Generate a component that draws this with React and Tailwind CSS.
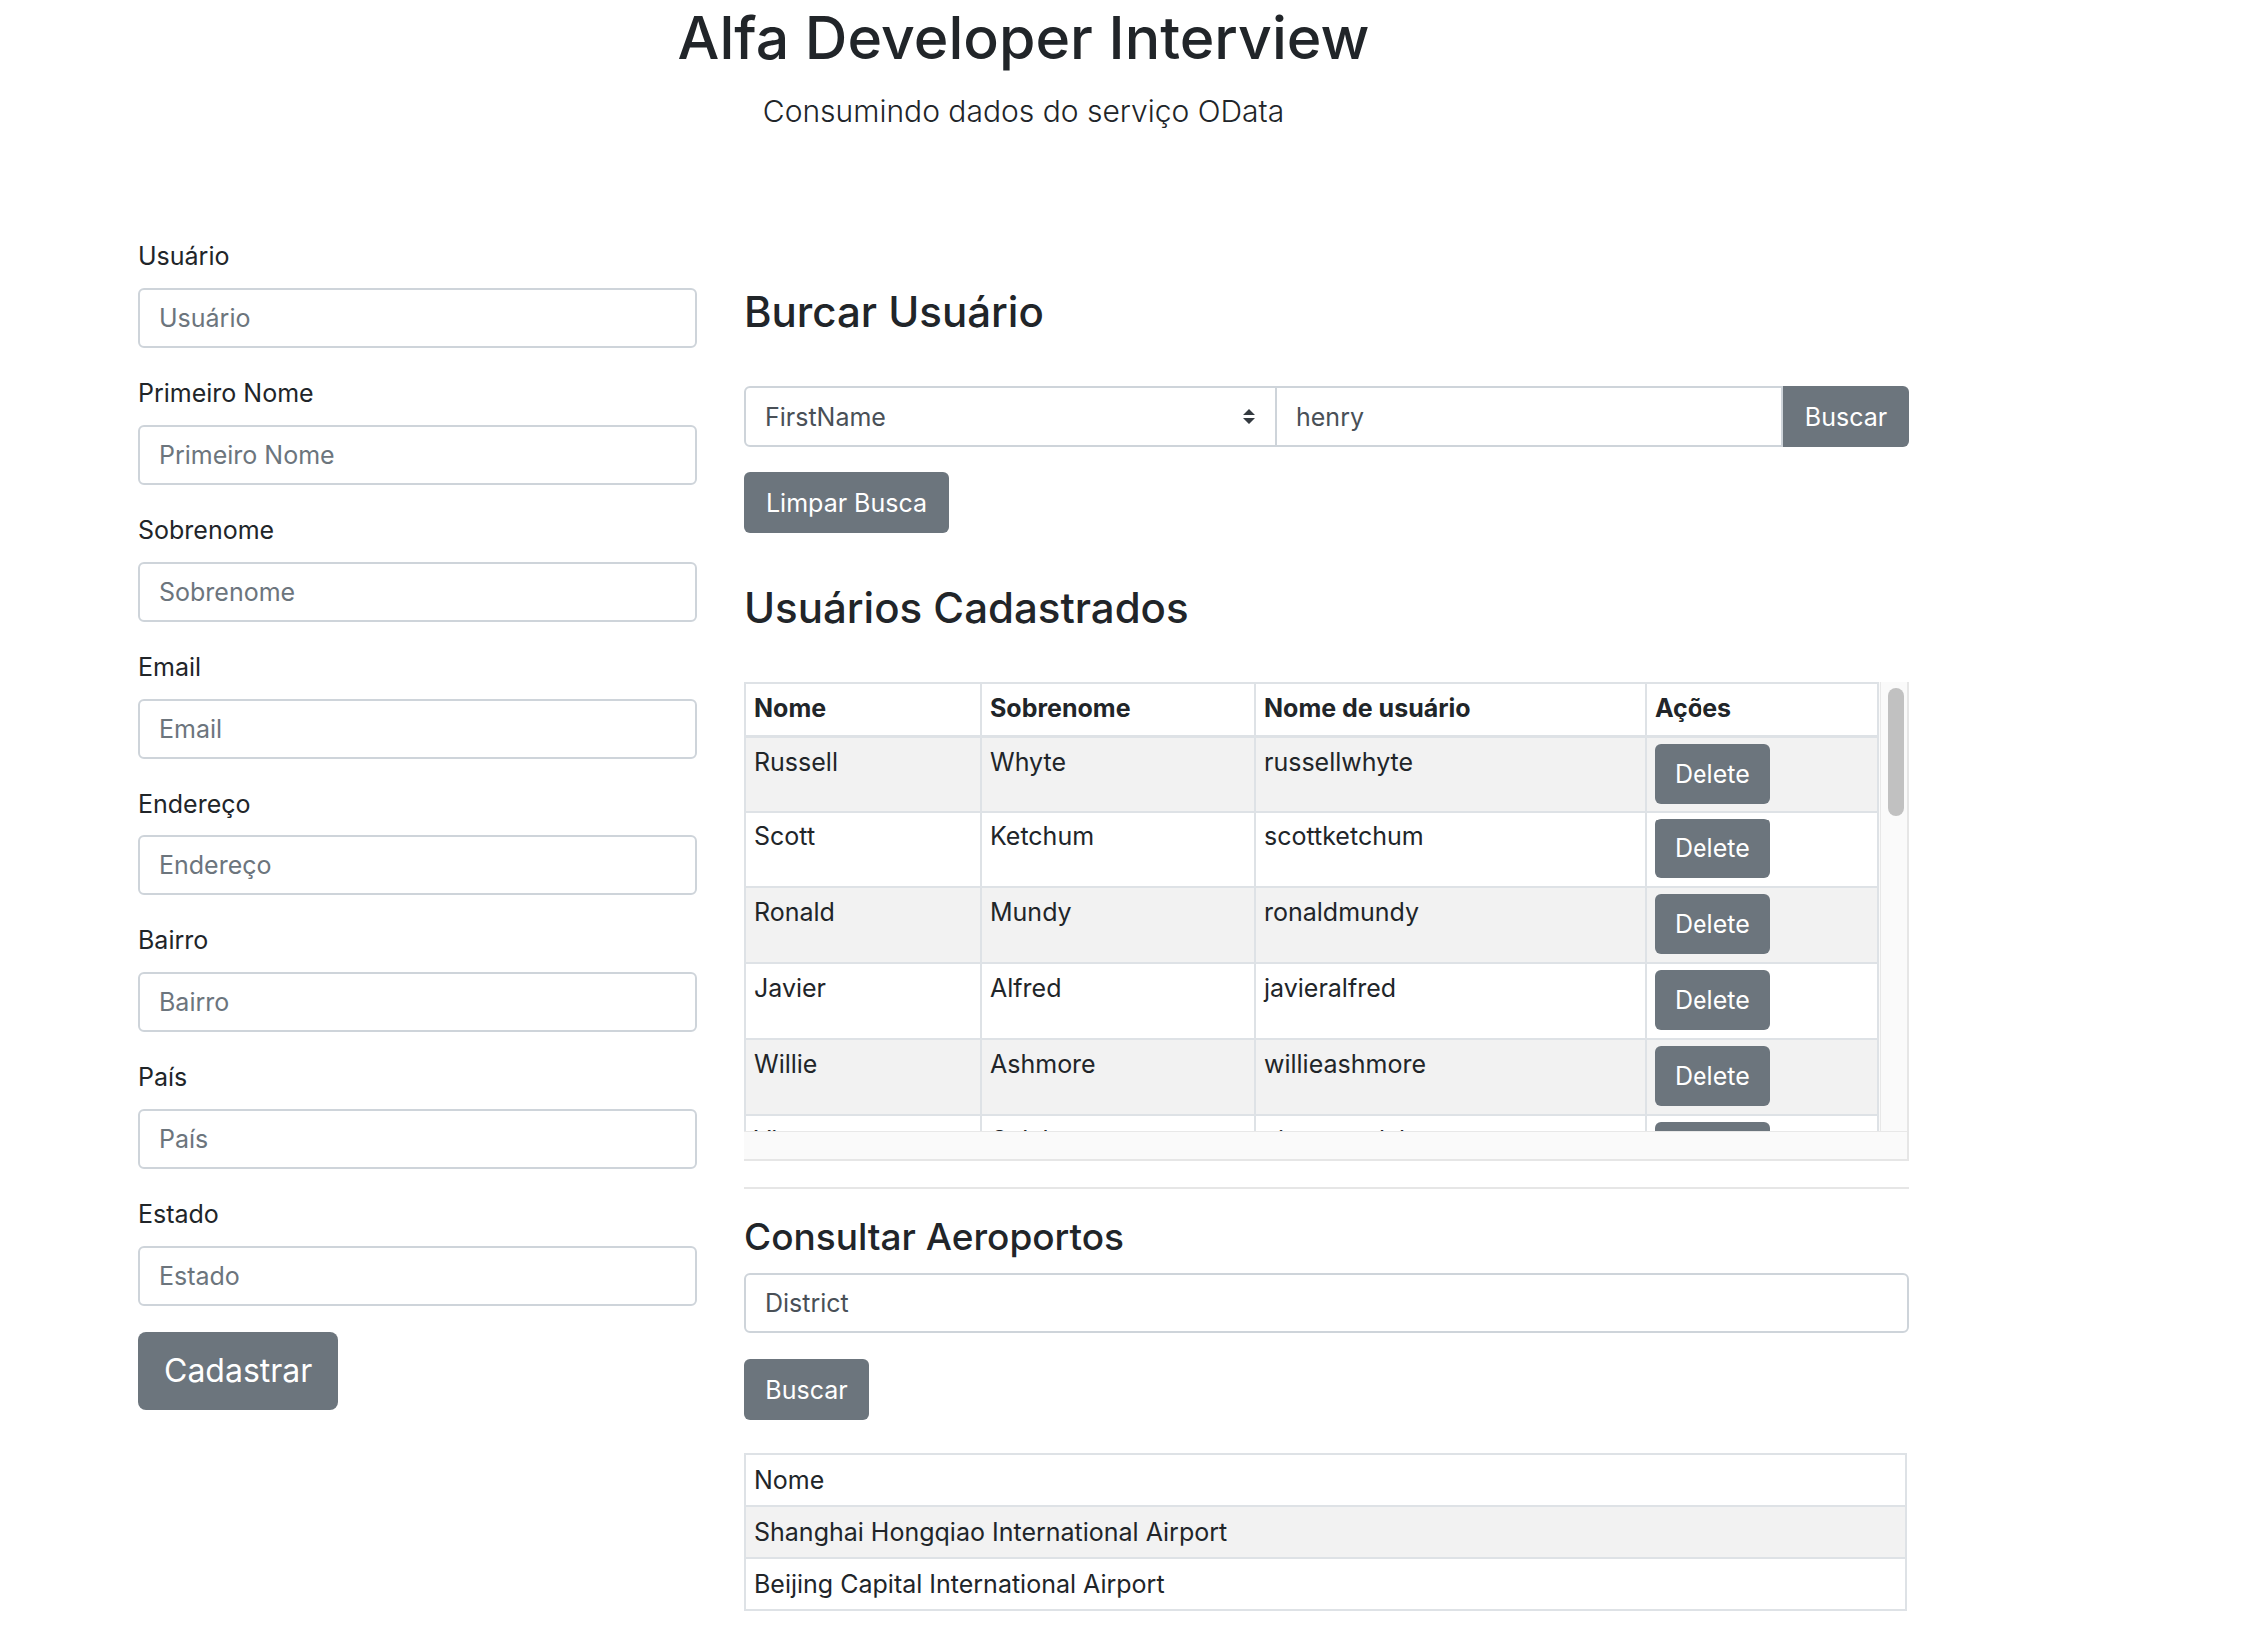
import React from 'react'

// Cadastro + busca de usuários do serviço TripPin (OData)

const FIELDS = ['Usuário', 'Primeiro Nome', 'Sobrenome', 'Email', 'Endereço', 'Bairro', 'País', 'Estado']

const USERS = [
  ['Russell', 'Whyte', 'russellwhyte'],
  ['Scott', 'Ketchum', 'scottketchum'],
  ['Ronald', 'Mundy', 'ronaldmundy'],
  ['Javier', 'Alfred', 'javieralfred'],
  ['Willie', 'Ashmore', 'willieashmore'],
  ['Vincent', 'Calabrese', 'vincentcalabrese'],
  ['Clyde', 'Guess', 'clydeguess'],
]

const AIRPORTS = ['Shanghai Hongqiao International Airport', 'Beijing Capital International Airport']

const inputCls =
  'block h-[60px] w-full rounded-[6px] border-2 border-[#ced4da] bg-white px-[19px] text-[25px] text-[#495057] placeholder:text-[#6c757d] focus:outline-none'

const btnCls = 'rounded-[6px] bg-[#6c757d] px-[19px] text-[25px] leading-[38px] text-white'

function SortArrows() {
  return (
    <svg width="12" height="15" viewBox="0 0 4 5" className="shrink-0">
      <path d="M2 0L0 2h4zm0 5L0 3h4z" fill="#343a40" />
    </svg>
  )
}

function UserForm() {
  return (
    <form className="w-[560px] shrink-0 pt-[237px]" onSubmit={(e) => e.preventDefault()}>
      {FIELDS.map((f) => (
        <div key={f} className="mb-[26px]">
          <label className="mb-[13px] block leading-[38px]">{f}</label>
          <input readOnly placeholder={f} className={inputCls} />
        </div>
      ))}
      <button className="h-[78px] rounded-[8px] bg-[#6c757d] px-[26px] text-[32px] text-white">Cadastrar</button>
    </form>
  )
}

function UsersTable() {
  return (
    <div className="mt-[50px] flex h-[480px] w-[1166px] flex-col border-r-2 border-b-2 border-[#e6e6e6] bg-[#fafafa]">
      <div className="flex h-[450px]">
        <div className="w-[1137px] overflow-hidden">
          <table className="w-[1134px] table-fixed border-collapse bg-white">
            <colgroup>
              <col className="w-[236px]" />
              <col className="w-[274px]" />
              <col className="w-[391px]" />
              <col className="w-[233px]" />
            </colgroup>
            <thead>
              <tr className="h-[53px]">
                {['Nome', 'Sobrenome', 'Nome de usuário', 'Ações'].map((h) => (
                  <th key={h} className="border-2 border-b-[3px] border-[#dee2e6] px-[8px] pt-[5px] text-left align-top font-bold">
                    {h}
                  </th>
                ))}
              </tr>
            </thead>
            <tbody>
              {USERS.map((u, i) => (
                <tr key={u[2]} className={i % 2 === 0 ? 'h-[76px] bg-[#f2f2f2]' : 'h-[76px] bg-white'}>
                  {u.map((c, j) => (
                    <td key={j} className="border-2 border-[#dee2e6] px-[8px] pt-[5px] align-top">{c}</td>
                  ))}
                  <td className="border-2 border-[#dee2e6] px-[8px] pt-[6px] align-top">
                    <button className="h-[60px] rounded-[6px] bg-[#6c757d] px-[20px] text-white">Delete</button>
                  </td>
                </tr>
              ))}
            </tbody>
          </table>
        </div>
        <div className="relative flex-1 border-l border-[#e8e8e8]">
          <div className="absolute left-[7px] top-[6px] h-[128px] w-[16px] rounded-full bg-[#c1c1c1]" />
        </div>
      </div>
      <div className="flex-1 border-t border-[#e8e8e8]" />
    </div>
  )
}

function Airports() {
  return (
    <section>
      <hr className="mt-[26px] border-t-2 border-[#e6e6e6]" />
      <h4 className="mt-[26px] text-[37px] font-medium leading-[44px]">Consultar Aeroportos</h4>
      <input readOnly defaultValue="District" className={inputCls + ' mt-[14px]'} />
      <button className={btnCls + ' mt-[26px] block h-[61px] w-[125px] px-0'}>Buscar</button>
      <table className="mt-[33px] w-[1164px] border-collapse">
        <tbody>
          {['Nome', ...AIRPORTS].map((a, i) => (
            <tr key={a} className={i === 1 ? 'h-[52px] bg-[#f2f2f2]' : 'h-[52px] bg-white'}>
              <td className="border-2 border-[#dee2e6] px-[8px] align-middle">{a}</td>
            </tr>
          ))}
        </tbody>
      </table>
    </section>
  )
}

export default function App() {
  return (
    <div className="min-h-[1642px] bg-white font-['Inter','Liberation_Sans',sans-serif] text-[25px] leading-[38px] text-[#212529]">
      <div className="ml-[138px] w-[1773px]">
        <header className="text-center">
          <h1 className="text-[59px] font-medium leading-[76px]">Alfa Developer Interview</h1>
          <p className="mt-[11px] text-[30px] font-light leading-[48px]">Consumindo dados do serviço OData</p>
        </header>

        <div className="-mt-[135px] flex">
          <UserForm />

          <div className="ml-[47px] w-[1166px] pt-[288px]">
            <h3 className="text-[42px] font-medium leading-[48px]">Burcar Usuário</h3>

            <div className="mt-[50px] flex h-[61px]">
              <div className="flex w-[533px] items-center justify-between rounded-l-[6px] border-2 border-[#ced4da] pl-[19px] pr-[20px] text-[#495057]">
                <span>FirstName</span>
                <SortArrows />
              </div>
              <input
                readOnly
                defaultValue="henry"
                className="h-full min-w-0 flex-1 border-2 border-l-0 border-[#ced4da] px-[19px] text-[25px] text-[#495057] focus:outline-none"
              />
              <button className="w-[126px] rounded-r-[6px] bg-[#6c757d] text-white">Buscar</button>
            </div>

            <button className={btnCls + ' mt-[25px] h-[61px] w-[205px] px-0'}>Limpar Busca</button>

            <h3 className="mt-[51px] text-[42px] font-medium leading-[48px]">Usuários Cadastrados</h3>
            <UsersTable />

            <Airports />
          </div>
        </div>
      </div>
    </div>
  )
}
